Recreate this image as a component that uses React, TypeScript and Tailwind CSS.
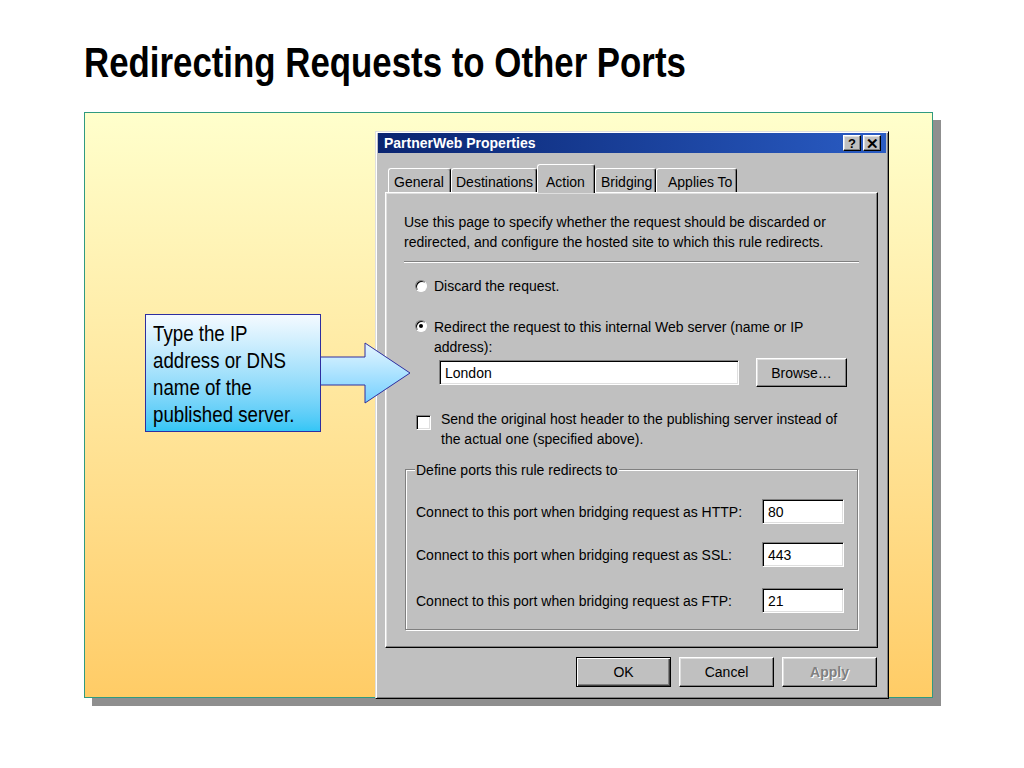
import React from 'react'

const raised =
    'border border-t-white border-l-white border-r-black border-b-black shadow-[inset_-1px_-1px_0_#808080,inset_1px_1px_0_#dfdfdf] bg-[#c0c0c0]'
const sunken =
    'border border-t-[#808080] border-l-[#808080] border-r-white border-b-white shadow-[inset_1px_1px_0_#000,inset_-1px_-1px_0_#dfdfdf] bg-white'

function Radio({ checked }: { checked?: boolean }) {
    return (
        <span className="w-[12px] h-[12px] rounded-full bg-white border border-t-[#808080] border-l-[#808080] border-r-white border-b-white shadow-[inset_1px_1px_0_#000] flex items-center justify-center shrink-0">
            {checked && <span className="w-[4px] h-[4px] rounded-full bg-black" />}
        </span>
    )
}

function PortRow({ label, value, className }: { label: string, value: string, className?: string }) {
    return (
        <div className={`flex items-center justify-between h-[25px] ${className ?? ''}`}>
            <span>{label}</span>
            <div className={`w-[82px] h-[25px] pl-[5px] flex items-center ${sunken}`}>{value}</div>
        </div>
    )
}

const tabs = [
    { name: 'General', w: 'w-[63px] pl-[5px]' },
    { name: 'Destinations', w: 'w-[86px] pl-[4px]' },
    { name: 'Action', w: 'w-[58px] pl-[8px]', active: true },
    { name: 'Bridging', w: 'w-[61px] pl-[5px]' },
    { name: 'Applies To', w: 'w-[81px] pl-[11px]' },
]

export default function App() {
    return (
        <div className="w-[1024px] h-[768px] bg-white overflow-hidden font-['Liberation_Sans',Arial,sans-serif] text-black">
            <h1 className="pl-[84px] pt-[41px] h-[84px] text-[43px] leading-none font-bold whitespace-nowrap">
                <span className="inline-block origin-left scale-x-[0.81]">Redirecting Requests to Other Ports</span>
            </h1>

            {/* slide panel */}
            <div className="relative ml-[84px] mt-[28px] w-[849px] h-[586px] flex items-start border border-[#2f9a80] bg-linear-to-b from-[#ffffcc] to-[#ffcc66] shadow-[8px_8px_0_#8f8f8f]">
                {/* callout */}
                <div className="relative z-10 ml-[60px] mt-[201px] w-[176px] h-[118px] pl-[7px] pt-[5px] border border-[#2e2ea0] bg-linear-to-b from-[#f4faff] to-[#33c6f6] text-[22px] leading-[27px] whitespace-nowrap">
                    <span className="inline-block origin-left scale-x-[0.85]">
                        Type the IP<br />address or DNS<br />name of the<br />published server.
                    </span>
                </div>
                <svg className="absolute z-[5] left-[233px] top-[227px]" width="95" height="66" viewBox="0 0 95 66">
                    <defs>
                        <linearGradient id="arrowFill" x1="0" y1="0" x2="0" y2="1">
                            <stop offset="0" stopColor="#e6f6ff" />
                            <stop offset="1" stopColor="#74d0ff" />
                        </linearGradient>
                    </defs>
                    <polygon
                        points="0,17 47,17 47,3 92,33 47,63 47,45 0,45"
                        fill="url(#arrowFill)"
                        stroke="#2e2ea0"
                        strokeWidth="1"
                    />
                </svg>

                {/* dialog */}
                <div className="ml-[54px] mt-[18px] w-[514px] h-[568px] px-[2px] pt-[1px] bg-[#c0c0c0] border border-t-[#dfdfdf] border-l-[#dfdfdf] border-r-black border-b-black shadow-[inset_1px_1px_0_#fff,inset_-1px_-1px_0_#808080] text-[14px] leading-[20px]">
                    <div className="h-[20px] flex items-center justify-between pl-[6px] pr-[5px] bg-linear-to-r from-[#0a2470] to-[#2a5cc4]">
                        <span className="text-white font-bold text-[14px]">PartnerWeb Properties</span>
                        <div className="flex gap-[2px]">
                            <div className={`w-[18px] h-[16px] flex items-center justify-center text-[13px] font-bold leading-none ${raised}`}>?</div>
                            <div className={`w-[18px] h-[16px] flex items-center justify-center text-[15px] font-bold leading-none ${raised}`}>✕</div>
                        </div>
                    </div>

                    <div className="ml-[7px]">
                        {/* tabs */}
                        <div className="mt-[11px] h-[28px] flex items-end pl-[3px]">
                            {tabs.map(t => (
                                <div
                                    key={t.name}
                                    className={
                                        t.active
                                            ? `${t.w} relative z-10 h-[29px] -mb-[1px] pt-[7px] bg-[#c0c0c0] border-t border-l border-r border-t-white border-l-white border-r-black rounded-t-[3px] shadow-[inset_-1px_0_0_#808080]`
                                            : `${t.w} h-[24px] pt-[3px] border-t border-l border-r border-t-white border-l-white border-r-black rounded-t-[3px] shadow-[inset_-1px_0_0_#808080]`
                                    }
                                >
                                    {t.name}
                                </div>
                            ))}
                        </div>

                        {/* tab page */}
                        <div className="w-[493px] h-[456px] pl-[18px] pr-[18px] pt-[19px] border border-t-white border-l-white border-r-black border-b-black shadow-[inset_-1px_-1px_0_#808080,inset_1px_1px_0_#dfdfdf]">
                            <p>
                                Use this page to specify whether the request should be discarded or<br />
                                redirected, and configure the hosted site to which this rule redirects.
                            </p>
                            <div className="mt-[9px] h-[2px] border-t border-t-[#808080] border-b border-b-white" />

                            <div className="mt-[13px] ml-[11px] flex items-center gap-[7px]">
                                <Radio />
                                <span>Discard the request.</span>
                            </div>

                            <div className="mt-[21px] ml-[11px] flex items-start gap-[7px]">
                                <div className="mt-[3px]"><Radio checked /></div>
                                <span>Redirect the request to this internal Web server (name or IP<br />address):</span>
                            </div>

                            <div className="mt-[1px] ml-[35px] h-[29px] flex items-center gap-[17px]">
                                <div className={`w-[300px] h-[25px] pl-[5px] flex items-center ${sunken}`}>London</div>
                                <div className={`w-[91px] h-[29px] flex items-center justify-center ${raised}`}>Browse…</div>
                            </div>

                            <div className="mt-[22px] ml-[12px] flex items-start gap-[10px]">
                                <span className={`mt-[6px] w-[15px] h-[15px] shrink-0 ${sunken}`} />
                                <span>Send the original host header to the publishing server instead of<br />the actual one (specified above).</span>
                            </div>

                            {/* group box */}
                            <div className="relative mt-[20px] ml-[1px] w-[453px] h-[161px] pl-[10px] pr-[13px] pt-[29px] border border-[#808080] shadow-[inset_1px_1px_0_#fff,1px_1px_0_#fff]">
                                <span className="absolute left-[9px] -top-[9px] px-[1px] bg-[#c0c0c0] leading-[18px]">Define ports this rule redirects to</span>
                                <PortRow label="Connect to this port when bridging request as HTTP:" value="80" />
                                <PortRow label="Connect to this port when bridging request as SSL:" value="443" className="mt-[18px]" />
                                <PortRow label="Connect to this port when bridging request as FTP:" value="21" className="mt-[21px]" />
                            </div>
                        </div>
                    </div>

                    {/* buttons */}
                    <div className="mt-[9px] pr-[9px] flex justify-end gap-[8px]">
                        <div className="w-[95px] h-[30px] flex items-center justify-center border border-black shadow-[inset_1px_1px_0_#fff,inset_-1px_-1px_0_#404040,inset_-2px_-2px_0_#808080]">OK</div>
                        <div className={`w-[95px] h-[30px] flex items-center justify-center ${raised}`}>Cancel</div>
                        <div className={`w-[95px] h-[30px] flex items-center justify-center font-bold text-[#808080] [text-shadow:1px_1px_0_#fff] ${raised}`}>Apply</div>
                    </div>
                </div>
            </div>
        </div>
    )
}
